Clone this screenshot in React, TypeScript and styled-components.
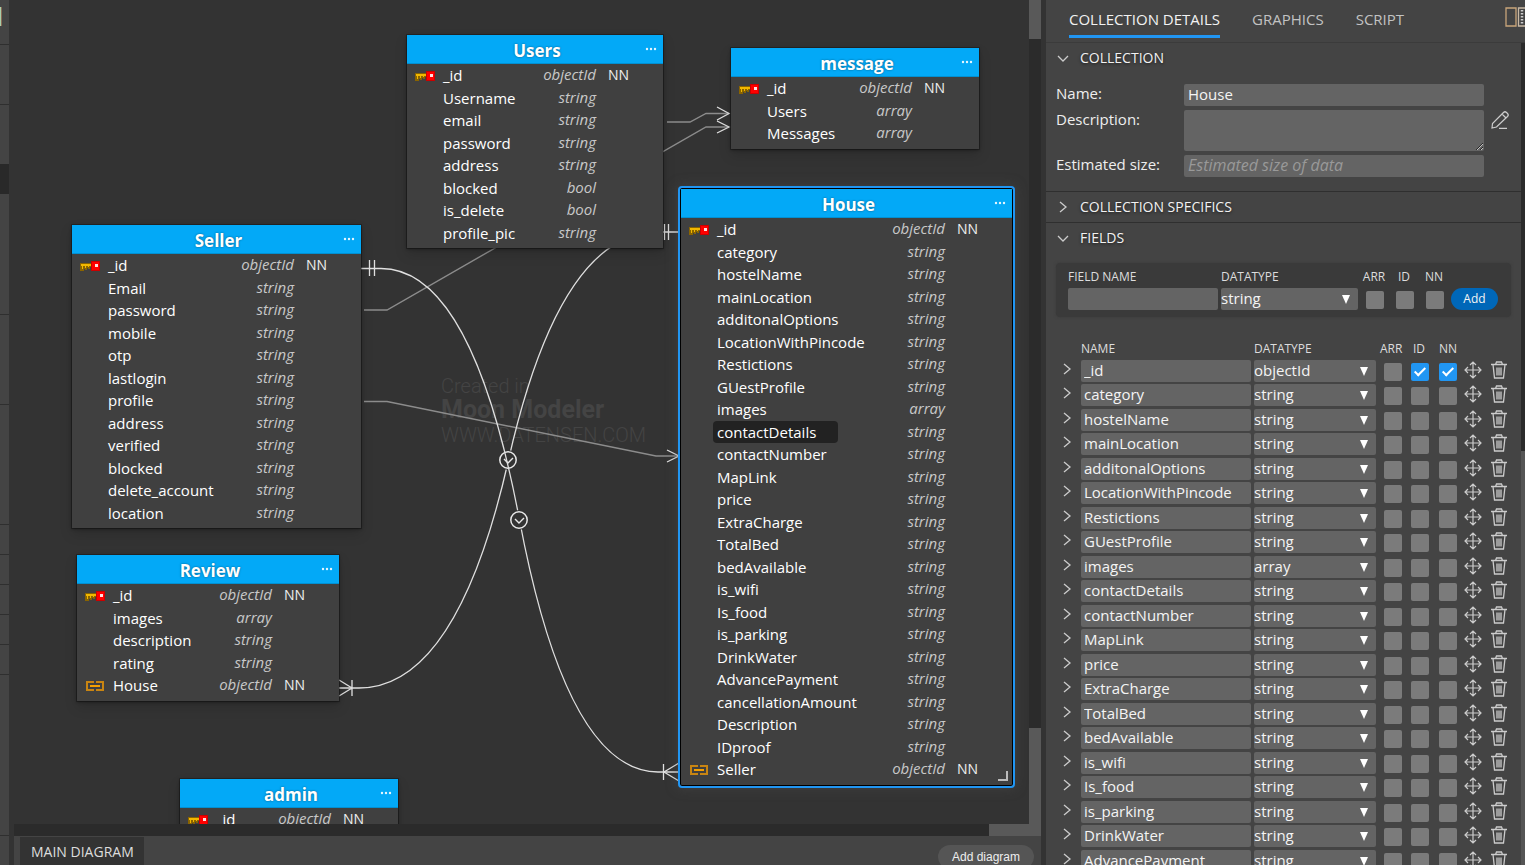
import React from "react";
import styled, { createGlobalStyle, css } from "styled-components";

const GlobalStyle = createGlobalStyle`
  *, *::before, *::after { box-sizing: border-box; }
  body {
    margin: 0;
    background: #333333;
    color: #eeeeee;
    font-family: "Open Sans", "Noto Sans", sans-serif;
    font-size: 15px;
    line-height: 1.5;
  }
  button, input, select, textarea { font: inherit; color: inherit; }
`;

/* ---------- shell ---------- */

const Shell = styled.div`
  display: flex;
  height: 100vh;
  overflow: hidden;
`;

const Rail = styled.div`
  display: flex;
  flex-direction: column;
  flex: 0 0 9px;
  background: #444444;
`;

const RailItem = styled.div<{ $height: number; $tone?: "active" | "plain" }>`
  flex: 0 0 ${(p) => p.$height}px;
  ${(p) => p.$tone === "active" && css`background: #292929;`}
  ${(p) => !p.$tone && css`border-bottom: 1px solid #2f2f2f;`}
`;

const RailLogo = styled.span`
  display: block;
  width: 2px;
  height: 19px;
  margin-top: 7px;
  background: #a9cfa9;
  border-right: 1px solid #8a6a55;
`;

const Workspace = styled.main`
  display: flex;
  flex-direction: column;
  flex: 1 1 0;
  min-width: 0;
  padding-right: 5px;
`;

const CanvasRow = styled.div`
  display: flex;
  flex: 1 1 0;
  min-height: 0;
`;

const Canvas = styled.div`
  position: relative;
  flex: 1 1 0;
  min-width: 0;
  overflow: hidden;
  background: #333333;
`;

const VerticalBar = styled.div`
  display: flex;
  flex-direction: column;
  justify-content: space-between;
  flex: 0 0 12px;
  background: #2b2b2b;
`;

const HorizontalBar = styled.div`
  display: flex;
  justify-content: flex-end;
  flex: 0 0 12px;
  margin-left: 5px;
  background: #2b2b2b;
`;

const BarEnd = styled.div<{ $size: number }>`
  flex: 0 0 ${(p) => p.$size}px;
  background: #595959;
`;

const DiagramTabs = styled.div`
  display: flex;
  justify-content: space-between;
  flex: 0 0 29px;
  margin-left: 5px;
  padding: 1px 7px 0 6px;
  overflow: hidden;
  background: #444444;
`;

const DiagramTab = styled.button`
  border: 0;
  padding: 0 10px 0 11px;
  background: #333333;
  color: #dddddd;
  font-size: 14px;
`;

const AddDiagram = styled.button`
  flex: 0 0 auto;
  height: 24px;
  margin-top: 8px;
  padding: 0 14px;
  border: 0;
  border-radius: 12px;
  background: #555555;
  color: #eeeeee;
  font-family: "Liberation Sans", Arial, sans-serif;
  font-size: 12px;
`;

/* ---------- diagram ---------- */

const Lines = styled.svg`
  position: absolute;
  top: 0;
  left: 0;
`;

const Watermark = styled.div`
  position: absolute;
  left: 432px;
  top: 374px;
  color: #444444;
  font-family: Roboto, sans-serif;
  font-size: 20px;
  font-weight: 300;
  line-height: 24px;
  strong { font-size: 25px; font-weight: 700; }
`;

const NodeBox = styled.section<{ $x: number; $y: number; $w: number; $selected?: boolean }>`
  position: absolute;
  left: ${(p) => p.$x}px;
  top: ${(p) => p.$y}px;
  width: ${(p) => p.$w}px;
  padding-bottom: 4px;
  background: #404040;
  box-shadow: ${(p) =>
    p.$selected
      ? "0 0 0 1px #000000, 0 0 12px 4px rgba(80, 80, 80, 0.4)"
      : "0 0 0 1px rgba(0, 0, 0, 0.25), 0 1px 3px rgba(0, 0, 0, 0.45), 0 6px 12px rgba(0, 0, 0, 0.15)"};
  ${(p) =>
    p.$selected &&
    css`
      border-radius: 1px;
      outline: 2px solid #2196f3;
      outline-offset: 1px;
    `}
`;

const NodeHeader = styled.header`
  display: grid;
  grid-template-columns: 24px 1fr 20px;
  height: 29px;
  background: #03a9f7;
  border-bottom: 1px solid #0290d2;
`;

const NodeTitle = styled.h2`
  grid-column: 2;
  margin: 0;
  color: #ffffff;
  font-size: 17px;
  font-weight: 700;
  line-height: 31px;
  text-align: center;
  text-shadow: 0 0 2px rgba(0, 0, 0, 0.5);
`;

const NodeMenu = styled.button`
  display: flex;
  align-items: center;
  height: 28px;
  padding: 0 0 0 2px;
  border: 0;
  background: none;
`;

const NodeRow = styled.div`
  display: grid;
  grid-template-columns: 32px 1fr auto 67px;
`;

const NodeIcon = styled.span`
  display: flex;
  align-items: center;
  justify-content: flex-end;
  padding: 2px 4px 0 0;
  svg { flex: none; }
`;

const NodeField = styled.span<{ $active?: boolean }>`
  justify-self: start;
  padding: 0 4px;
  color: #ffffff;
  ${(p) =>
    p.$active &&
    css`
      min-width: 125px;
      background: #222222;
      border-radius: 4px;
    `}
`;

const NodeType = styled.span`
  color: #c8c8c8;
  font-style: italic;
  line-height: 21px;
`;

const NodeFlag = styled.span`
  padding-left: 12px;
  font-size: 14px;
  line-height: 22px;
`;

const CornerGrip = styled.span`
  position: absolute;
  right: 4px;
  bottom: 4px;
  width: 10px;
  height: 10px;
  border: solid #bbbbbb;
  border-width: 0 2px 2px 0;
`;

/* ---------- details panel ---------- */

const Panel = styled.aside`
  display: flex;
  flex-direction: column;
  flex: 0 0 479px;
  background: #444444;
`;

const TabBar = styled.div`
  display: flex;
  gap: 32px;
  flex: 0 0 43px;
  padding-left: 23px;
  border-bottom: 1px solid #3b3b3b;
`;

const Tab = styled.button<{ $active?: boolean }>`
  height: 38px;
  padding: 4px 0 0;
  border: 0;
  border-bottom: 3px solid ${(p) => (p.$active ? "#2196f3" : "transparent")};
  background: none;
  color: ${(p) => (p.$active ? "#f2f2f2" : "#c2c2c2")};
`;

const LayoutButton = styled.button`
  display: flex;
  width: 20px;
  height: 20px;
  margin: 7px 0 0 auto;
  padding: 0;
  border: 0;
  background: none;
  overflow: hidden;
  svg { flex: none; }
`;

const PanelScroll = styled.div`
  display: flex;
  flex: 1 1 0;
  min-height: 0;
  overflow: hidden;
`;

const PanelBody = styled.div`
  flex: 1 1 0;
  min-width: 0;
`;

const PanelBar = styled.div`
  display: flex;
  flex-direction: column;
  flex: 0 0 4px;
  background: #2b2b2b;
`;

const PanelThumb = styled.div`
  flex: 1 1 0;
  margin-top: 408px;
  background: #555555;
`;

const Section = styled.section<{ $last?: boolean }>`
  ${(p) => !p.$last && css`border-bottom: 1px solid #2f2f2f;`}
`;

const SectionHead = styled.button`
  display: flex;
  align-items: center;
  gap: 11px;
  width: 100%;
  height: 30px;
  padding: 0 11px 1px;
  border: 0;
  background: none;
  color: #f2f2f2;
  font-size: 14px;
  text-shadow: 0 1px 3px rgba(0, 0, 0, 0.6);
`;

const Form = styled.div`
  display: grid;
  grid-template-columns: 128px 300px 1fr;
  row-gap: 4px;
  padding: 11px 0 14px 10px;
`;

const Label = styled.label`
  height: 22px;
  line-height: 18px;
`;

const fieldSkin = css`
  display: block;
  width: 100%;
  border: 0;
  border-radius: 2px;
  background: #646464;
  color: #f4f4f4;
  outline: none;
`;

const Input = styled.input`
  ${fieldSkin}
  height: 22px;
  padding: 0 4px 1px;
  &::placeholder { color: #999999; font-size: 16px; font-style: italic; opacity: 1; }
`;

const RowInput = styled(Input)`
  padding: 0 3px 1px;
`;

const Textarea = styled.textarea`
  ${fieldSkin}
  height: 41px;
  padding: 0 4px;
  resize: vertical;
`;

const IconButton = styled.button`
  display: flex;
  align-items: center;
  width: 100%;
  padding: 0;
  border: 0;
  background: none;
  svg { flex: none; }
`;

const EditButton = styled(IconButton)`
  height: 20px;
  padding-left: 6px;
`;

const SelectWrap = styled.span`
  display: block;
  position: relative;
  svg { position: absolute; right: 8px; top: 7px; pointer-events: none; }
`;

const SelectBox = styled.select`
  ${fieldSkin}
  appearance: none;
  height: 22px;
  padding: 0 0 1px;
  line-height: 21px;
`;

const Check = styled.input.attrs({ type: "checkbox" })`
  appearance: none;
  display: grid;
  place-items: center;
  width: 18px;
  height: 18px;
  margin: 0;
  border-radius: 2px;
  background: #7b7b7b;
  &:checked { background: #2196f3; }
  &:checked::after {
    content: "";
    width: 6px;
    height: 11px;
    margin-bottom: 2px;
    border: solid #ffffff;
    border-width: 0 2px 2px 0;
    transform: rotate(45deg);
  }
`;

const NewField = styled.form`
  display: grid;
  grid-template-columns: 153px 137px 30px 30px 30px 1fr;
  margin: 10px 10px 0;
  padding: 3px 12px 7px;
  background: #3a3a3a;
  border-radius: 4px;
  box-shadow: 0 0 3px #3a3a3a;
`;

const NameCell = styled.span`
  padding-right: 3px;
`;

const Caption = styled.label<{ $center?: boolean }>`
  color: #dddddd;
  font-size: 12px;
  line-height: 22px;
  ${(p) => p.$center && css`text-align: center; padding-left: 2px;`}
`;

const CheckCell = styled.span`
  padding: 3px 0 0 8px;
`;

const AddButton = styled.button`
  width: 47px;
  height: 22px;
  margin-left: 3px;
  padding: 0;
  border: 0;
  border-radius: 11px;
  background: #0067b8;
  color: #f4f4f4;
  font-size: 12px;
`;

const FieldTable = styled.table`
  display: block;
  margin: 20px 0 0 10px;
  thead, tbody { display: block; }
  tr {
    display: grid;
    grid-template-columns: 25px 173px 130px 27px 28px 25px 26px 26px;
  }
  thead tr { height: 1.5em; }
  th {
    padding: 0;
    color: #dddddd;
    font-size: 12px;
    font-weight: 400;
    line-height: 24px;
    text-align: left;
  }
  th:nth-child(4) { margin-left: -4px; }
  th:nth-child(5) { padding-left: 2px; }
`;

const FieldRow = styled.tr`
  padding-bottom: 2px;
`;

const Cell = styled.td<{ $right?: number; $top?: number }>`
  height: 1.5em;
  padding: ${(p) => p.$top ?? 0}px ${(p) => p.$right ?? 0}px 0 0;
`;

/* ---------- icons ---------- */

const KeyIcon = () => (
  <svg width="20" height="12" viewBox="0 0 20 12" aria-hidden="true">
    <path d="M0 3H12V7H10V9H8V8H7V10H5V9H4V11H0Z" fill="#8a6400" />
    <path d="M1 4H12V6H1ZM2 6H3V9H2ZM5 6H6V8H5ZM8 6H9V7H8Z" fill="#f2b800" />
    <rect x="11" y="1" width="9" height="10" fill="#cc0000" />
    <rect x="12" y="2" width="7" height="8" fill="#ff0000" />
    <rect x="15" y="4" width="3" height="3" fill="#ffe0e0" />
  </svg>
);

const LinkIcon = () => (
  <svg width="20" height="10" viewBox="0 0 20 10" aria-hidden="true" fill="none">
    <path d="M9 1H2V9H9M11 1H18V9H11" stroke="#c98512" strokeWidth="2" />
    <path d="M5 5H15" stroke="#f6a000" strokeWidth="2" />
  </svg>
);

const DotsIcon = () => (
  <svg width="12" height="4" viewBox="0 0 12 4" fill="#e6f6ff" aria-hidden="true">
    <circle cx="2" cy="2" r="1.2" />
    <circle cx="6" cy="2" r="1.2" />
    <circle cx="10" cy="2" r="1.2" />
  </svg>
);

const Chevron = ({ open }: { open?: boolean }) => (
  <svg width="12" height="12" viewBox="0 0 12 12" fill="none" stroke="#cccccc" strokeWidth="1.3" aria-hidden="true">
    <path d={open ? "M1 4L6 9L11 4" : "M3 1L9 6L3 11"} />
  </svg>
);

const RowChevron = () => (
  <svg width="22" height="18" viewBox="0 0 22 18" fill="none" stroke="#cccccc" strokeWidth="1.3" aria-hidden="true">
    <path d="M8 4L14 9L8 14" />
  </svg>
);

const Triangle = () => (
  <svg width="8" height="9" viewBox="0 0 8 9" fill="#ffffff" aria-hidden="true">
    <path d="M0 0H8L4 9Z" />
  </svg>
);

const MoveIcon = () => (
  <svg width="18" height="20" viewBox="0 0 18 20" fill="none" stroke="#cccccc" strokeWidth="1.2" aria-hidden="true">
    <path d="M9 2V18M1 10H17M6 5L9 2L12 5M6 15L9 18L12 15M4 7L1 10L4 13M14 7L17 10L14 13" />
  </svg>
);

const TrashIcon = () => (
  <svg width="18" height="20" viewBox="0 0 18 20" fill="none" stroke="#cccccc" strokeWidth="1.3" aria-hidden="true">
    <path d="M1 4.5H17M5.5 4.5L6.5 2H11.5L12.5 4.5M3 4.5L4.5 18H13.5L15 4.5M7 7.5V15.5M9 7.5V15.5M11 7.5V15.5" />
  </svg>
);

const PencilIcon = () => (
  <svg width="20" height="20" viewBox="0 0 20 20" fill="none" stroke="#cccccc" strokeWidth="1.2" aria-hidden="true">
    <path d="M2 18L2.5 13.5L13.5 2.5Q15 1 16.5 2.5L17.5 3.5Q19 5 17.5 6.5L6.5 17ZM12 4L16 8M9 18.3H17" />
  </svg>
);

const LayoutIcon = () => (
  <svg width="24" height="20" viewBox="0 0 24 20" fill="none" aria-hidden="true">
    <path d="M1 1H11V19H1Z" stroke="#c9a57a" strokeWidth="1.3" />
    <path d="M13.5 1H23V19H13.5Z" stroke="#c9b9a5" strokeWidth="1.3" />
    <path d="M17 3V18" stroke="#cccccc" strokeWidth="2.5" strokeDasharray="1.5 1.5" />
  </svg>
);

/* ---------- data ---------- */

type Field = { name: string; type?: string; mark?: "key" | "link"; active?: boolean };
type Entity = { title: string; x: number; y: number; w: number; selected?: boolean; fields: Field[] };

const id: Field = { name: "_id", type: "objectId", mark: "key" };
const strings = (...names: string[]): Field[] => names.map((name) => ({ name }));

const house: Field[] = [
  id,
  ...strings("category", "hostelName", "mainLocation", "additonalOptions", "LocationWithPincode", "Restictions", "GUestProfile"),
  { name: "images", type: "array" },
  { name: "contactDetails", active: true },
  ...strings(
    "contactNumber", "MapLink", "price", "ExtraCharge", "TotalBed", "bedAvailable", "is_wifi", "Is_food",
    "is_parking", "DrinkWater", "AdvancePayment", "cancellationAmount", "Description", "IDproof"
  ),
  { name: "Seller", type: "objectId", mark: "link" },
];

const entities: Entity[] = [
  {
    title: "Users", x: 398, y: 35, w: 256,
    fields: [id, ...strings("Username", "email", "password", "address"),
      { name: "blocked", type: "bool" }, { name: "is_delete", type: "bool" }, { name: "profile_pic" }],
  },
  {
    title: "message", x: 722, y: 48, w: 248,
    fields: [id, { name: "Users", type: "array" }, { name: "Messages", type: "array" }],
  },
  {
    title: "Seller", x: 63, y: 225, w: 289,
    fields: [id, ...strings("Email", "password", "mobile", "otp", "lastlogin", "profile", "address",
      "verified", "blocked", "delete_account", "location")],
  },
  {
    title: "Review", x: 68, y: 555, w: 262,
    fields: [id, { name: "images", type: "array" }, ...strings("description", "rating"),
      { name: "House", type: "objectId", mark: "link" }],
  },
  { title: "admin", x: 171, y: 779, w: 218, fields: [id] },
  { title: "House", x: 672, y: 189, w: 331, selected: true, fields: house },
];

const railItems: { h: number; tone?: "active" | "plain" }[] = [
  { h: 60 }, { h: 59, tone: "plain" }, { h: 30, tone: "active" }, { h: 121 }, { h: 90 }, { h: 120 },
  { h: 30 }, { h: 30 }, { h: 30 }, { h: 30 }, { h: 30 }, { h: 161 },
];

/* ---------- parts ---------- */

const EntityNode = ({ entity }: { entity: Entity }) => (
  <NodeBox $x={entity.x} $y={entity.y} $w={entity.w} $selected={entity.selected}>
    <NodeHeader>
      <NodeTitle>{entity.title}</NodeTitle>
      <NodeMenu aria-label={`${entity.title} menu`}><DotsIcon /></NodeMenu>
    </NodeHeader>
    {entity.fields.map((f) => (
      <NodeRow key={f.name}>
        <NodeIcon>
          {f.mark === "key" && <KeyIcon />}
          {f.mark === "link" && <LinkIcon />}
        </NodeIcon>
        <NodeField $active={f.active}>{f.name}</NodeField>
        <NodeType>{f.type ?? "string"}</NodeType>
        <NodeFlag>{f.mark ? "NN" : ""}</NodeFlag>
      </NodeRow>
    ))}
    {entity.selected && <CornerGrip />}
  </NodeBox>
);

const Badge = ({ x, y }: { x: number; y: number }) => (
  <g>
    <circle cx={x} cy={y} r="10" fill="#333333" />
    <circle cx={x} cy={y} r="8.2" fill="none" stroke="#e8e8e8" strokeWidth="1.5" />
    <path d={`M${x - 4} ${y - 1}L${x} ${y + 3}L${x + 5} ${y - 2}`} fill="none" stroke="#e8e8e8" strokeWidth="1.4" />
  </g>
);

const Connections = () => (
  <Lines width="1020" height="824" viewBox="9 0 1020 824" fill="none" aria-hidden="true">
    <g stroke="#8c8c8c" strokeWidth="1.4">
      <path d="M667 122H690L706 113.5H729" />
      <path d="M364 310H387L706 127H729" />
      <path d="M364 401.5H387L656 456H678" />
    </g>
    <g stroke="#e0e0e0" strokeWidth="1.3">
      <path d="M717 107L729 113.5L717 120M717 121L729 127L717 133M667 450L679 456L667 462" />
      <path d="M339 688H359Q457 688 508.5 460T658 232H678" />
      <path d="M664.5 224V240M668.5 224V240" />
      <path d="M339 680L352 688L339 696M352 680V696" />
    </g>
    <Badge x={508} y={460} />
    <g stroke="#e0e0e0" strokeWidth="1.3">
      <path d="M361 268.5H381Q472 268.5 519.5 520T658 772H678" />
      <path d="M369.5 260V276M374.5 260V276" />
      <path d="M679 763L664 772L679 781M663.5 764V780" />
    </g>
    <Badge x={519} y={520} />
  </Lines>
);

const TypeSelect = ({ value, label, inputId }: { value: string; label?: string; inputId?: string }) => (
  <SelectWrap>
    <SelectBox id={inputId} aria-label={label} defaultValue={value}>
      <option>{value}</option>
    </SelectBox>
    <Triangle />
  </SelectWrap>
);

const CollectionForm = () => (
  <Form>
    <Label htmlFor="c-name">Name:</Label>
    <Input id="c-name" defaultValue="House" />
    <span />
    <Label htmlFor="c-desc">Description:</Label>
    <Textarea id="c-desc" />
    <EditButton aria-label="Edit description"><PencilIcon /></EditButton>
    <Label htmlFor="c-size">Estimated size:</Label>
    <Input id="c-size" placeholder="Estimated size of data" />
  </Form>
);

const NewFieldForm = () => (
  <NewField onSubmit={(e) => e.preventDefault()}>
    <Caption htmlFor="n-name">FIELD NAME</Caption>
    <Caption htmlFor="n-type">DATATYPE</Caption>
    <Caption $center htmlFor="n-arr">ARR</Caption>
    <Caption $center htmlFor="n-id">ID</Caption>
    <Caption $center htmlFor="n-nn">NN</Caption>
    <span />
    <NameCell><Input id="n-name" /></NameCell>
    <TypeSelect inputId="n-type" value="string" />
    <CheckCell><Check id="n-arr" /></CheckCell>
    <CheckCell><Check id="n-id" /></CheckCell>
    <CheckCell><Check id="n-nn" /></CheckCell>
    <AddButton>Add</AddButton>
  </NewField>
);

const FieldList = () => (
  <FieldTable>
    <thead>
      <tr>
        <th /><th>NAME</th><th>DATATYPE</th><th>ARR</th><th>ID</th><th>NN</th><th /><th />
      </tr>
    </thead>
    <tbody>
      {house.slice(0, 21).map((f) => (
        <FieldRow key={f.name}>
          <Cell><IconButton aria-label={`Expand ${f.name}`}><RowChevron /></IconButton></Cell>
          <Cell $right={3}><RowInput aria-label="Name" defaultValue={f.name} /></Cell>
          <Cell $right={8}><TypeSelect label="Datatype" value={f.type ?? "string"} /></Cell>
          <Cell $top={3}><Check aria-label="Array" /></Cell>
          <Cell $top={3}><Check aria-label="ID" defaultChecked={f.mark === "key"} /></Cell>
          <Cell $top={3}><Check aria-label="Not null" defaultChecked={f.mark === "key"} /></Cell>
          <Cell><IconButton aria-label="Move"><MoveIcon /></IconButton></Cell>
          <Cell><IconButton aria-label="Delete"><TrashIcon /></IconButton></Cell>
        </FieldRow>
      ))}
    </tbody>
  </FieldTable>
);

export default function App() {
  return (
    <>
      <GlobalStyle />
      <Shell>
        <Rail>
          <RailItem $height={45}><RailLogo /></RailItem>
          {railItems.map((r, i) => <RailItem key={i} $height={r.h} $tone={r.tone} />)}
        </Rail>
        <Workspace>
          <CanvasRow>
            <Canvas>
              <Watermark>
                <div>Created in</div>
                <strong>Moon Modeler</strong>
                <div>WWW.DATENSEN.COM</div>
              </Watermark>
              <Connections />
              {entities.map((e) => <EntityNode key={e.title} entity={e} />)}
            </Canvas>
            <VerticalBar>
              <BarEnd $size={39} />
              <BarEnd $size={96} />
            </VerticalBar>
          </CanvasRow>
          <HorizontalBar><BarEnd $size={52} /></HorizontalBar>
          <DiagramTabs>
            <DiagramTab>MAIN DIAGRAM</DiagramTab>
            <AddDiagram>Add diagram</AddDiagram>
          </DiagramTabs>
        </Workspace>
        <Panel>
          <TabBar>
            <Tab $active>COLLECTION DETAILS</Tab>
            <Tab>GRAPHICS</Tab>
            <Tab>SCRIPT</Tab>
            <LayoutButton aria-label="Toggle layout"><LayoutIcon /></LayoutButton>
          </TabBar>
          <PanelScroll>
            <PanelBody>
              <Section>
                <SectionHead><Chevron open />COLLECTION</SectionHead>
                <CollectionForm />
              </Section>
              <Section>
                <SectionHead><Chevron />COLLECTION SPECIFICS</SectionHead>
              </Section>
              <Section $last>
                <SectionHead><Chevron open />FIELDS</SectionHead>
                <NewFieldForm />
                <FieldList />
              </Section>
            </PanelBody>
            <PanelBar><PanelThumb /></PanelBar>
          </PanelScroll>
        </Panel>
      </Shell>
    </>
  );
}
